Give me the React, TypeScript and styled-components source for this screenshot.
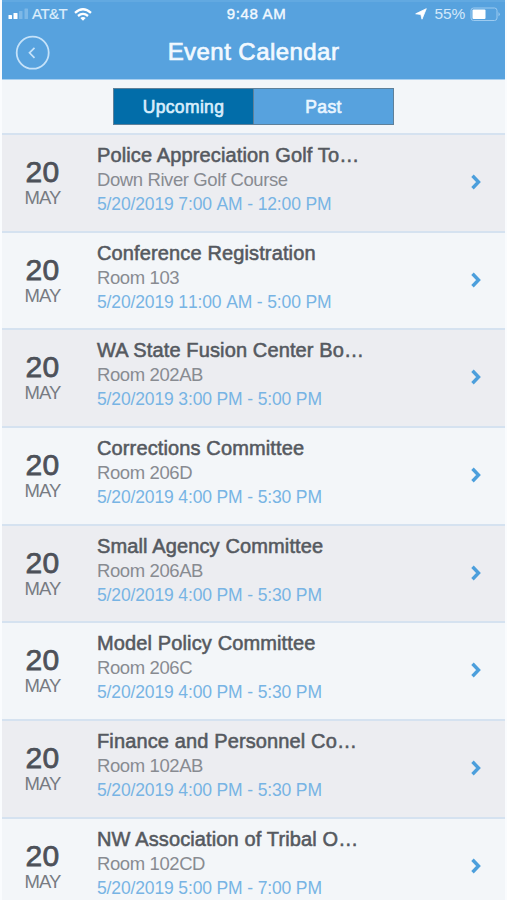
import React from "react";
import styled, { createGlobalStyle } from "styled-components";

const GlobalStyle = createGlobalStyle`
  * { box-sizing: border-box; }
  html, body { margin: 0; padding: 0; background: #f3f6f9; }
  body { height: 900px; overflow: hidden; font-family: "Liberation Sans", Arial, sans-serif; }
`;

const Screen = styled.main`
  width: 507px;
  height: 900px;
  display: flex;
  flex-direction: column;
  overflow: hidden;
  background: #f3f6f9;
  border-left: 2px solid #fafcfe;
  border-right: 2px solid #fafcfe;
`;

const Header = styled.header`
  flex: none;
  height: 80px;
  margin: 0 -2px;
  background: #57a2de;
  border-top: 2px solid #62a9e1;
  border-bottom: 1px solid #a9d0f0;
  color: #f2f9ff;
`;

const StatusBar = styled.div`
  height: 24px;
  padding: 0 6px 0 8px;
  display: grid;
  grid-template-columns: 1fr auto 1fr;
  align-items: center;
  font-size: 15px;
  line-height: 24px;
`;

const StatusGroup = styled.div<{ $end?: boolean }>`
  display: flex;
  align-items: center;
  justify-content: ${(p) => (p.$end ? "flex-end" : "flex-start")};
`;

const Carrier = styled.span`
  margin: 0 7px 0 3px;
  color: #dceefc;
  font-size: 15px;
  letter-spacing: -0.5px;
  -webkit-text-stroke: 0.2px currentColor;
`;

const Clock = styled.span`
  padding-left: 4px;
  font-size: 15px;
  letter-spacing: 0.65px;
  -webkit-text-stroke: 0.4px currentColor;
`;

const Percent = styled.span`
  margin: 0 5px 0 8px;
  color: #d3e8fa;
  font-size: 15.5px;
  letter-spacing: -0.2px;
`;

const NavBar = styled.div`
  height: 53px;
  padding: 0 15px;
  display: grid;
  grid-template-columns: 36px 1fr 36px;
  align-items: center;
`;

const BackButton = styled.button`
  width: 36px;
  height: 36px;
  padding: 0;
  border: 0;
  background: none;
  display: flex;
`;

const Title = styled.h1`
  margin: 0;
  padding-bottom: 2px;
  text-align: center;
  font-size: 24px;
  line-height: 30px;
  font-weight: 400;
  letter-spacing: 0.45px;
  -webkit-text-stroke: 0.7px currentColor;
`;

const TabBar = styled.nav`
  flex: none;
  height: 53px;
  padding: 8px 0 0;
  display: flex;
  justify-content: center;
  align-items: flex-start;
`;

const Tab = styled.button<{ $active?: boolean }>`
  width: ${(p) => (p.$active ? 141 : 140)}px;
  height: 37px;
  padding: 2px 0 0;
  border: 1px solid #5f8099;
  border-left-width: ${(p) => (p.$active ? 1 : 0)}px;
  background: ${(p) => (p.$active ? "#026da9" : "#57a2de")};
  color: ${(p) => (p.$active ? "#d8eefc" : "#e9f5ff")};
  font: 400 17.5px "Liberation Sans", Arial, sans-serif;
  letter-spacing: 0.35px;
  -webkit-text-stroke: 0.65px currentColor;
`;

const List = styled.ul`
  flex: none;
  margin: 0;
  padding: 0;
  list-style: none;
`;

const Row = styled.li`
  height: 97.66px;
  padding: 0 22px 0 0;
  display: grid;
  grid-template-columns: 80px 1fr 14px;
  column-gap: 15px;
  border-top: 2px solid #d5e2f0;
  background: #f3f6f9;
  &:nth-child(odd) { background: #ecedf1; }
`;

const DateBlock = styled.div`
  padding: 23px 0 0 1px;
  text-align: center;
`;

const Day = styled.div`
  color: #4d5159;
  font-size: 30px;
  line-height: 28px;
  letter-spacing: 0.2px;
  -webkit-text-stroke: 0.75px currentColor;
`;

const Month = styled.div`
  color: #777b82;
  font-size: 18.5px;
  line-height: 24px;
  letter-spacing: -0.9px;
`;

const Details = styled.div`
  padding-top: 8px;
  white-space: nowrap;
`;

const EventName = styled.h2`
  margin: 0;
  color: #555960;
  font-size: 20px;
  line-height: 25px;
  font-weight: 400;
  letter-spacing: 0.13px;
  -webkit-text-stroke: 0.55px currentColor;
`;

const Place = styled.div`
  color: #888b91;
  font-size: 18.5px;
  line-height: 24px;
  letter-spacing: -0.4px;
`;

const Time = styled.div`
  color: #77b4e4;
  font-size: 17.5px;
  line-height: 24px;
  letter-spacing: -0.14px;
  font-kerning: none;
`;

const Chevron = styled.svg`
  margin-top: 39px;
  width: 14px;
  height: 16px;
`;

const events = [
  ["Police Appreciation Golf To…", "Down River Golf Course", "7:00 AM - 12:00 PM"],
  ["Conference Registration", "Room 103", "11:00 AM - 5:00 PM"],
  ["WA State Fusion Center Bo…", "Room 202AB", "3:00 PM - 5:00 PM"],
  ["Corrections Committee", "Room 206D", "4:00 PM - 5:30 PM"],
  ["Small Agency Committee", "Room 206AB", "4:00 PM - 5:30 PM"],
  ["Model Policy Committee", "Room 206C", "4:00 PM - 5:30 PM"],
  ["Finance and Personnel Co…", "Room 102AB", "4:00 PM - 5:30 PM"],
  ["NW Association of Tribal O…", "Room 102CD", "5:00 PM - 7:00 PM"],
];

const SignalIcon = () => (
  <svg width="21" height="12" viewBox="0 0 21 12">
    <rect x="0.5" y="7" width="3.5" height="4" rx="0.6" fill="#fff" />
    <rect x="5.5" y="5" width="4" height="6" rx="0.6" fill="#fff" />
    <rect x="11" y="3" width="3.5" height="8" rx="0.6" fill="#7db8e7" />
    <rect x="16.5" y="0.5" width="3.5" height="10.5" rx="0.6" fill="#7db8e7" />
  </svg>
);

const WifiIcon = () => (
  <svg width="18" height="13" viewBox="0 0 18 13" fill="none" stroke="#fff" strokeWidth="2.3">
    <path d="M1 4.8Q9-2.2 17 4.8" />
    <path d="M4 8Q9 3.8 14 8" />
    <path d="M6.3 10Q9 7.8 11.7 10L9 12.8Z" fill="#fff" stroke="none" />
  </svg>
);

const LocationIcon = () => (
  <svg width="12" height="12" viewBox="0 0 12 12">
    <path d="M11.3.7 7 11.2 5.8 6.5.7 5.8Z" fill="#fff" stroke="#fff" strokeWidth="0.8" strokeLinejoin="round" />
  </svg>
);

const BatteryIcon = () => (
  <svg width="31" height="15" viewBox="0 0 31 15" fill="none">
    <rect x="1" y="1" width="26" height="12.5" rx="2.5" stroke="#9dcbf0" />
    <rect x="2.5" y="2.5" width="13" height="9.5" rx="1" fill="#fff" />
    <path d="M28.5 5v4.5q2.6-2.2 0-4.5" fill="#9dcbf0" />
  </svg>
);

export default function App() {
  return (
    <>
      <GlobalStyle />
      <Screen>
        <Header>
          <StatusBar>
            <StatusGroup>
              <SignalIcon />
              <Carrier>AT&amp;T</Carrier>
              <WifiIcon />
            </StatusGroup>
            <Clock>9:48 AM</Clock>
            <StatusGroup $end>
              <LocationIcon />
              <Percent>55%</Percent>
              <BatteryIcon />
            </StatusGroup>
          </StatusBar>
          <NavBar>
            <BackButton aria-label="Back">
              <svg width="36" height="36" viewBox="0 0 36 36" fill="none" stroke="#c5e2f9">
                <circle cx="17.7" cy="17.7" r="16" strokeWidth="1.8" />
                <path d="m19.5 12.8-5 5 5 5" strokeWidth="1.7" />
              </svg>
            </BackButton>
            <Title>Event Calendar</Title>
          </NavBar>
        </Header>
        <TabBar>
          <Tab $active>Upcoming</Tab>
          <Tab>Past</Tab>
        </TabBar>
        <List>
          {events.map(([name, place, time]) => (
            <Row key={name}>
              <DateBlock>
                <Day>20</Day>
                <Month>MAY</Month>
              </DateBlock>
              <Details>
                <EventName>{name}</EventName>
                <Place>{place}</Place>
                <Time>5/20/2019 {time}</Time>
              </Details>
              <Chevron viewBox="0 0 14 16" fill="none" stroke="#4c9fdc" strokeWidth="3.4">
                <path d="m3.5 1.8 6 6.2-6 6.2" />
              </Chevron>
            </Row>
          ))}
        </List>
      </Screen>
    </>
  );
}
